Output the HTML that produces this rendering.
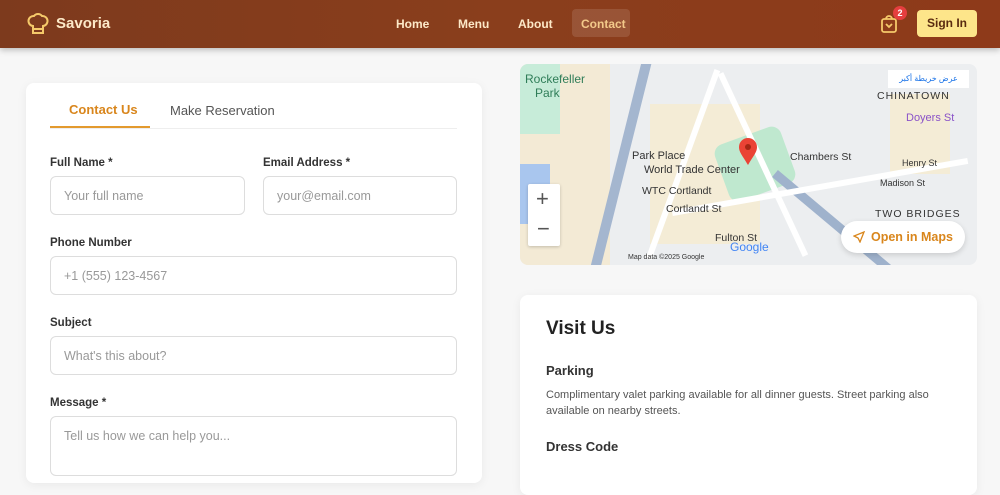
<!DOCTYPE html><html><head><style>
*{box-sizing:border-box;margin:0;padding:0}
body{width:1000px;height:456px;overflow:hidden;background:#f7f7f7;font-family:"Liberation Sans",sans-serif;position:relative}
.hdr{position:absolute;left:0;top:0;width:1000px;height:48px;background:linear-gradient(90deg,#7d3a1d,#8a3e1c 50%,#8e3a1a);box-shadow:0 2px 6px rgba(0,0,0,.25)}
.abs{position:absolute}
.nav{color:#fde9c8;font-size:12px;font-weight:bold;top:17px}
.card{position:absolute;background:#fff;border-radius:8px;box-shadow:0 2px 10px rgba(0,0,0,.06)}
.lbl{position:absolute;font-size:11.5px;color:#333;font-weight:bold}
.inp{position:absolute;border:1px solid #ddd;border-radius:6px;height:39px;font-size:12.5px;color:#999;padding:12px 13px}
.road{position:absolute;background:#fff}
.ml{position:absolute;font-size:10.5px;color:#333;white-space:nowrap}
</style></head><body>
<div class="hdr"></div>
<svg class="abs" style="left:27px;top:12px" width="22" height="24" viewBox="0 0 22 24" fill="none" stroke="#f5c96a" stroke-width="2"><path d="M6 14a5 5 0 0 1 1-10 5 5 0 0 1 8 0 5 5 0 0 1 1 10v7H6z M6 17h10"/></svg>
<div class="abs" style="left:56px;top:15px;color:#fde9c8;font-weight:bold;font-size:15px">Savoria</div>
<div class="abs nav" style="left:396px">Home</div>
<div class="abs nav" style="left:458px">Menu</div>
<div class="abs nav" style="left:518px">About</div>
<div class="abs" style="left:572px;top:9px;width:58px;height:28px;background:rgba(255,255,255,.12);border-radius:4px"></div>
<div class="abs nav" style="left:581px;color:#f3c98a">Contact</div>
<svg class="abs" style="left:880px;top:14px" width="18" height="20" viewBox="0 0 18 20" fill="none" stroke="#f5c96a" stroke-width="1.8"><rect x="2" y="5" width="14" height="13" rx="2"/><path d="M6 5a3 3 0 0 1 6 0M6 10l3 3 3-3"/></svg>
<div class="abs" style="left:893px;top:6px;width:14px;height:14px;border-radius:50%;background:#e53e3e;color:#fff;font-size:9px;font-weight:bold;text-align:center;line-height:14px">2</div>
<div class="abs" style="left:917px;top:10px;width:60px;height:27px;background:#fde58a;border-radius:4px;font-size:12px;font-weight:bold;color:#5a2b10;text-align:center;line-height:27px">Sign In</div>

<div class="card" style="left:26px;top:83px;width:456px;height:400px"></div>
<div class="abs" style="left:69px;top:102px;font-size:13px;color:#d9861c;font-weight:bold">Contact Us</div>
<div class="abs" style="left:170px;top:103px;font-size:13px;color:#555">Make Reservation</div>
<div class="abs" style="left:50px;top:128px;width:407px;height:1px;background:#eee"></div>
<div class="abs" style="left:50px;top:126px;width:100px;height:2px;background:#e39a2e"></div>
<div class="lbl" style="left:50px;top:157px">Full Name *</div>
<div class="lbl" style="left:263px;top:157px">Email Address *</div>
<div class="inp" style="left:50px;top:176px;width:195px">Your full name</div>
<div class="inp" style="left:263px;top:176px;width:194px">your@email.com</div>
<div class="lbl" style="left:50px;top:237px">Phone Number</div>
<div class="inp" style="left:50px;top:256px;width:407px">+1 (555) 123-4567</div>
<div class="lbl" style="left:50px;top:317px">Subject</div>
<div class="inp" style="left:50px;top:336px;width:407px">What's this about?</div>
<div class="lbl" style="left:50px;top:397px">Message *</div>
<div class="inp" style="left:50px;top:416px;width:407px;height:60px">Tell us how we can help you...</div>

<div class="abs" style="left:520px;top:64px;width:457px;height:201px;border-radius:8px;overflow:hidden;background:#eceef0">
 <div class="abs" style="left:0;top:0;width:90px;height:201px;background:#f3ead5"></div>
 <div class="abs" style="left:0;top:0;width:40px;height:70px;background:#c7ecd9"></div>
 <div class="abs" style="left:0;top:100px;width:30px;height:60px;background:#a9c6ee"></div>
 <div class="abs" style="left:95px;top:-10px;width:10px;height:230px;background:#a4b6cf;transform:rotate(14deg)"></div>
 <div class="abs" style="left:130px;top:40px;width:110px;height:140px;background:#f4ecd6"></div>
 <div class="abs" style="left:200px;top:70px;width:70px;height:60px;background:#bfe8cf;border-radius:10px;transform:rotate(-20deg)"></div>
 <div class="abs" style="left:370px;top:30px;width:60px;height:80px;background:#f4ecd6"></div>
 <div class="abs" style="left:255px;top:105px;width:200px;height:9px;background:#9fb2cc;transform:rotate(40deg);transform-origin:left"></div>
 <div class="road" style="left:150px;top:120px;width:300px;height:6px;transform:rotate(-10deg)"></div>
 <div class="road" style="left:160px;top:0;width:6px;height:201px;transform:rotate(20deg)"></div>
 <div class="road" style="left:240px;top:0;width:6px;height:201px;transform:rotate(-25deg)"></div>
 <div class="ml" style="left:5px;top:8px;color:#2f7d58;font-size:12px">Rockefeller<br>&nbsp;&nbsp;&nbsp;Park</div>
 <div class="ml" style="left:112px;top:86px;font-size:11px">Park Place</div>
 <div class="ml" style="left:124px;top:100px;font-size:11px">World Trade Center</div>
 <div class="ml" style="left:122px;top:121px">WTC Cortlandt</div>
 <div class="ml" style="left:146px;top:139px">Cortlandt St</div>
 <div class="ml" style="left:195px;top:168px">Fulton St</div>
 <div class="ml" style="left:270px;top:87px">Chambers St</div>
 <div class="ml" style="left:386px;top:48px;color:#8a52c8;font-size:11px">Doyers St</div>
 <div class="ml" style="left:357px;top:26px;letter-spacing:1px">CHINATOWN</div>
 <div class="ml" style="left:355px;top:144px;letter-spacing:1px">TWO BRIDGES</div>
 <div class="ml" style="left:382px;top:94px;font-size:9px">Henry St</div>
 <div class="ml" style="left:360px;top:114px;font-size:9px">Madison St</div>
 <div class="ml" style="left:108px;top:190px;font-size:7px">Map data ©2025 Google</div>
 <div class="ml" style="left:210px;top:176px;font-size:12px;color:#4285f4">Google</div>
 <svg class="abs" style="left:218px;top:74px" width="20" height="28" viewBox="0 0 20 28"><path d="M10 27C4 17 1 14 1 9a9 9 0 0 1 18 0c0 5-3 8-9 18z" fill="#ea4335"/><circle cx="10" cy="9" r="3" fill="#a52714"/></svg>
 <div class="abs" style="left:368px;top:6px;width:81px;height:18px;background:#fff;font-size:8px;color:#1a73e8;text-align:center;line-height:18px">عرض خريطة أكبر</div>
 <div class="abs" style="left:8px;top:120px;width:32px;height:62px;background:#fff;border-radius:2px;box-shadow:0 1px 3px rgba(0,0,0,.2)"></div>
 <div class="ml" style="left:16px;top:122px;font-size:22px;color:#555">+</div>
 <div class="ml" style="left:17px;top:152px;font-size:22px;color:#555">−</div>
 <div class="abs" style="left:321px;top:157px;width:124px;height:32px;background:#fff;border-radius:16px;box-shadow:0 2px 6px rgba(0,0,0,.15);font-size:12.5px;font-weight:bold;color:#d9861c;line-height:32px;padding-left:30px">Open in Maps</div>
 <svg class="abs" style="left:333px;top:167px" width="12" height="12" viewBox="0 0 12 12" fill="none" stroke="#d9861c" stroke-width="1.3"><path d="M11 1L1 5l4 2 2 4z"/></svg>
</div>

<div class="card" style="left:520px;top:295px;width:457px;height:200px"></div>
<div class="abs" style="left:546px;top:318px;font-size:19px;font-weight:bold;color:#222">Visit Us</div>
<div class="abs" style="left:546px;top:363px;font-size:13px;font-weight:bold;color:#333">Parking</div>
<div class="abs" style="left:546px;top:387px;font-size:11px;color:#555;line-height:16px;width:400px">Complimentary valet parking available for all dinner guests. Street parking also available on nearby streets.</div>
<div class="abs" style="left:546px;top:439px;font-size:13px;font-weight:bold;color:#333">Dress Code</div>
</body></html>
